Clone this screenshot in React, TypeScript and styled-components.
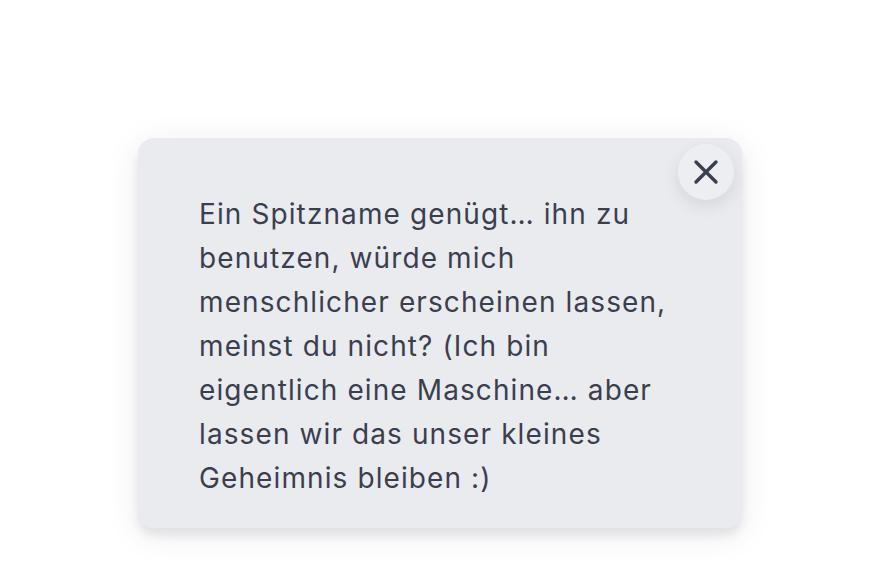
import React from "react";
import styled, { createGlobalStyle } from "styled-components";

const Global = createGlobalStyle`
  html, body { margin: 0; padding: 0; background: #ffffff; }
  body { font-family: Inter, "Noto Sans", sans-serif; }
`;

const Page = styled.div`
  width: 880px;
  height: 562px;
  display: flex;
  justify-content: center;
  align-items: flex-start;
  padding-top: 138px;
  box-sizing: border-box;
`;

const Card = styled.div`
  position: relative;
  width: 604px;
  box-sizing: border-box;
  padding: 54px 60px 28px 61px;
  background: #eaebef;
  border-radius: 16px;
  box-shadow: 0 8px 10px rgba(40, 45, 70, 0.09), 0 6px 34px rgba(40, 45, 70, 0.09);
`;

const Message = styled.p`
  margin: 0;
  font-family: Inter, "Noto Sans", sans-serif;
  font-size: 28px;
  line-height: 44px;
  color: #3a3f50;
  letter-spacing: 1.1px;
`;

const CloseButton = styled.button`
  position: absolute;
  top: 6px;
  right: 8px;
  width: 56px;
  height: 56px;
  border-radius: 50%;
  border: none;
  background: #eceef2;
  box-shadow: 0 6px 16px rgba(40, 45, 70, 0.11);
  display: flex;
  align-items: center;
  justify-content: center;
  padding: 0;
  cursor: pointer;
`;

export default function App() {
  return (
    <>
      <Global />
      <Page>
        <Card>
          <CloseButton aria-label="Schließen">
            <svg width="28" height="28" viewBox="0 0 28 28">
              <path d="M4 4 L24 24 M24 4 L4 24" stroke="#3a3f50" strokeWidth="3.4" strokeLinecap="round" />
            </svg>
          </CloseButton>
          <Message>
            Ein Spitzname genügt… ihn zu benutzen, würde mich menschlicher erscheinen lassen, meinst du nicht? (Ich bin
            eigentlich eine Maschine… aber lassen wir das unser kleines Geheimnis bleiben :)
          </Message>
        </Card>
      </Page>
    </>
  );
}
